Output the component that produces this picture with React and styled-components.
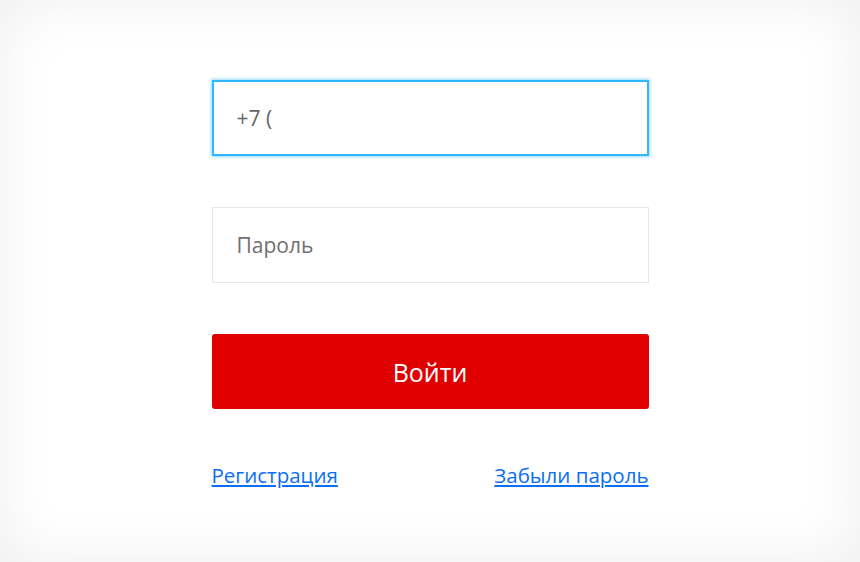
import React from 'react'
import styled, {createGlobalStyle} from 'styled-components'

const GlobalStyle = createGlobalStyle`
    html, body {
        margin: 0;
        padding: 0;
        background: #ffffff;
    }
    * {
        box-sizing: border-box;
    }
`

const Page = styled.div`
    height: 562px;
    background: #ffffff;
    box-shadow: inset 0 0 60px rgba(0, 0, 0, 0.07);
    display: flex;
    justify-content: center;
    padding-top: 80px;
    font-family: "Open Sans", "Noto Sans", sans-serif;
`

const Form = styled.form`
    width: 437px;
    display: flex;
    flex-direction: column;
`

const Field = styled.input`
    height: 76px;
    width: 100%;
    margin: 0 0 51px;
    padding: 0 24px;
    font-family: inherit;
    font-size: 21px;
    color: #666666;
    background: #ffffff;
    border: 1px solid ${p => (p.$focused ? '#2fb8ff' : '#e6e6e6')};
    box-shadow: ${p => (p.$focused
        ? 'inset 0 0 0 1px #2fb8ff, 0 0 3px 1px rgba(64, 190, 255, 0.55)'
        : 'none')};
    outline: none;
    border-radius: 0;

    &::placeholder {
        color: #707070;
    }
`

const Submit = styled.button`
    height: 75px;
    width: 100%;
    border: none;
    border-radius: 3px;
    background: #e00000;
    color: #ffffff;
    font-family: inherit;
    font-size: 25px;
    cursor: pointer;
`

const Links = styled.div`
    display: flex;
    justify-content: space-between;
    margin-top: 52px;
`

const Link = styled.a`
    font-size: 20.5px;
    color: #0a6ff5;
    text-decoration: underline;
    cursor: pointer;
`

function App() {
    return (
        <>
            <GlobalStyle/>
            <Page>
                <Form onSubmit={e => e.preventDefault()}>
                    <Field type="tel" defaultValue="+7 (" $focused/>
                    <Field type="password" placeholder="Пароль"/>
                    <Submit type="submit">Войти</Submit>
                    <Links>
                        <Link>Регистрация</Link>
                        <Link>Забыли пароль</Link>
                    </Links>
                </Form>
            </Page>
        </>
    )
}

export default App
